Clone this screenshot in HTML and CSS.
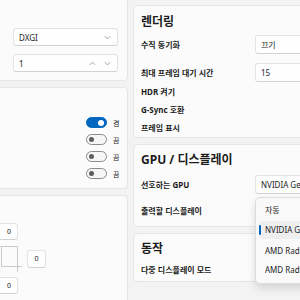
FILE: index.html
```html
<!DOCTYPE html>
<html lang="ko">
<head>
<meta charset="utf-8">
<link rel="stylesheet" href="styles.css">
</head>
<body>
<div class="page">
  <div class="col left">
    <section class="card lc1">
      <div class="box combo wide"><span>DXGI</span>
        <svg class="chev" viewBox="0 0 8 5" width="7" height="5"><path d="M1 1l3 3 3-3"/></svg>
      </div>
      <div class="box numbox wide"><span>1</span>
        <span class="spin">
          <svg class="chev" viewBox="0 0 8 5" width="7" height="5"><path d="M1 4l3-3 3 3"/></svg>
          <svg class="chev" viewBox="0 0 8 5" width="7" height="5"><path d="M1 1l3 3 3-3"/></svg>
        </span>
      </div>
    </section>
    <section class="card lc2">
      <div class="trow"><span class="toggle on"><span class="knob"></span></span><span class="tlabel">켬</span></div>
      <div class="trow"><span class="toggle"><span class="knob"></span></span><span class="tlabel">끔</span></div>
      <div class="trow"><span class="toggle"><span class="knob"></span></span><span class="tlabel">끔</span></div>
      <div class="trow"><span class="toggle"><span class="knob"></span></span><span class="tlabel">끔</span></div>
    </section>
    <section class="card lc3">
      <div class="mgrid">
        <div class="mbox m-top">0</div>
        <svg class="mrect" width="34" height="34" viewBox="0 0 34 34">
          <path d="M9.5 6.5H26.5V32M10.5 6.5V26.5H31"/>
        </svg>
        <div class="mbox m-right">0</div>
        <div class="mbox m-bottom">0</div>
      </div>
    </section>
  </div>

  <div class="col right">
    <section class="card rc">
      <h2 class="title t1">렌더링</h2>
      <div class="row ctl"><span class="label">수직 동기화</span><div class="box rbox">끄기</div></div>
      <div class="row ctl gap"><span class="label">최대 프레임 대기 시간</span><div class="box rbox">15</div></div>
      <div class="row"><span class="label">HDR 켜기</span></div>
      <div class="row"><span class="label">G-Sync 호환</span></div>
      <div class="row"><span class="label">프레임 표시</span></div>
    </section>
    <section class="card rc rc2">
      <h2 class="title t2">GPU / 디스플레이</h2>
      <div class="row ctl"><span class="label">선호하는 GPU</span><div class="box rbox">NVIDIA GeForce RTX</div></div>
      <div class="row ctl gap2"><span class="label">출력할 디스플레이</span>
        <div class="box rbox anchor">
          <div class="popup">
            <div class="item">자동</div>
            <div class="item sel"><span class="bar"></span>NVIDIA GeForce RTX</div>
            <div class="item">AMD Radeon Graphics</div>
            <div class="item">AMD Radeon Graphics</div>
          </div>
        </div>
      </div>
    </section>
    <section class="card rc rc3">
      <h2 class="title t3">동작</h2>
      <div class="row r3"><span class="label">다중 디스플레이 모드</span></div>
    </section>
  </div>
</div>
</body>
</html>
```
FILE: styles.css
```css
* { box-sizing: border-box; }
body {
  margin: 0;
  width: 300px;
  height: 300px;
  overflow: hidden;
  background: #f3f3f3;
  font-family: "Noto Sans", "Noto Sans CJK KR", sans-serif;
  font-size: 8px;
  color: #1b1b1b;
}
.page { display: flex; align-items: flex-start; }
.col { display: flex; flex-direction: column; flex: none; }
.left { width: 138px; margin-left: -10px; margin-top: -20px; gap: 6px; }
.right { width: 207px; margin-left: 5px; margin-top: 5px; gap: 6px; }
.card {
  background: #fbfbfb;
  border: 1px solid #e6e6e6;
  border-radius: 4px;
}

/* generic input box */
.box {
  background: #fefefe;
  border: 1px solid #e3e3e3;
  border-bottom-color: #d2d2d2;
  border-radius: 3px;
  display: flex;
  align-items: center;
  white-space: nowrap;
  overflow: hidden;
}
.chev { fill: none; stroke: #8a8a8a; stroke-width: 0.9; }

/* left column */
.lc1 {
  height: 101px;
  padding: 47px 9px 7px 0;
  display: flex;
  flex-direction: column;
  align-items: flex-end;
  gap: 8px;
}
.wide { width: 105px; height: 18px; padding: 0 6px 0 5px; justify-content: space-between; }
.spin { display: flex; gap: 8px; }

.lc2 {
  padding: 29px 7px 9px 0;
  display: flex;
  flex-direction: column;
  align-items: flex-end;
  gap: 6px;
}
.trow { display: flex; align-items: center; gap: 6px; height: 11px; }
.toggle {
  width: 21px;
  height: 11px;
  border-radius: 6px;
  border: 1px solid #8b8b8b;
  background: #f6f6f6;
  display: flex;
  align-items: center;
  padding: 0 2px;
}
.toggle .knob { width: 5px; height: 5px; border-radius: 50%; background: #5c5c5c; }
.toggle.on { background: #0067c0; border-color: #0067c0; justify-content: flex-end; }
.toggle.on .knob { background: #fff; width: 6px; height: 6px; }
.tlabel { font-size: 7px; width: 7px; }

.lc3 { height: 120px; padding-top: 27px; }
.mgrid {
  display: grid;
  grid-template-columns: 27px 19px;
  grid-template-rows: 17px 37px 17px;
  column-gap: 9px;
}
.mbox {
  background: #fefefe;
  border: 1px solid #e3e3e3;
  border-bottom-color: #d2d2d2;
  border-radius: 3px;
  display: flex;
  align-items: center;
  justify-content: center;
  font-size: 7px;
}
.m-top { grid-column: 1; grid-row: 1; padding-left: 9px; }
.mrect { grid-column: 1; grid-row: 2; overflow: visible; fill: none; stroke: #c9c9c9; stroke-width: 1; }
.m-right { grid-column: 2; grid-row: 2; align-self: center; height: 18px; }
.m-bottom { grid-column: 1; grid-row: 3; padding-left: 9px; }

/* right column */
.rc { padding: 9px 10px 1px 7px; }
.title { margin: 0; font-size: 12px; line-height: 14px; font-weight: 700; }
.t1 { margin-bottom: 5px; }
.row { display: flex; align-items: center; height: 18px; }
.row.ctl { height: 20px; }
.row.gap { margin-top: 8px; }
.label { flex: 1; font-weight: 700; white-space: nowrap; }
.rbox { width: 74px; height: 19px; padding-left: 5px; flex: none; }

.rc2 { padding-top: 8px; padding-bottom: 6px; }
.t2 { margin-bottom: 7px; }
.row.gap2 { margin-top: 6px; }
.anchor { position: relative; overflow: visible; }
.popup {
  position: absolute;
  left: -1px;
  top: -5px;
  width: 80px;
  height: 87px;
  background: #f9f9f9;
  border: 1px solid #dcdcdc;
  border-radius: 5px;
  box-shadow: 0 4px 9px rgba(0,0,0,0.13);
  padding: 2px 3px 3px 3px;
  display: flex;
  flex-direction: column;
  overflow: hidden;
}
.item {
  height: 20px;
  display: flex;
  align-items: center;
  padding-left: 6px;
  white-space: nowrap;
  position: relative;
  border-radius: 3px;
}
.item.sel { background: #efefef; margin: 2px 0 0; height: 18px; margin-bottom: 2px; }
.bar {
  position: absolute;
  left: 0;
  top: 4px;
  width: 2px;
  height: 10px;
  border-radius: 1px;
  background: #0067c0;
}

.rc3 { padding-top: 8px; padding-bottom: 3px; }
.r3 { margin-top: 4px; }
```
